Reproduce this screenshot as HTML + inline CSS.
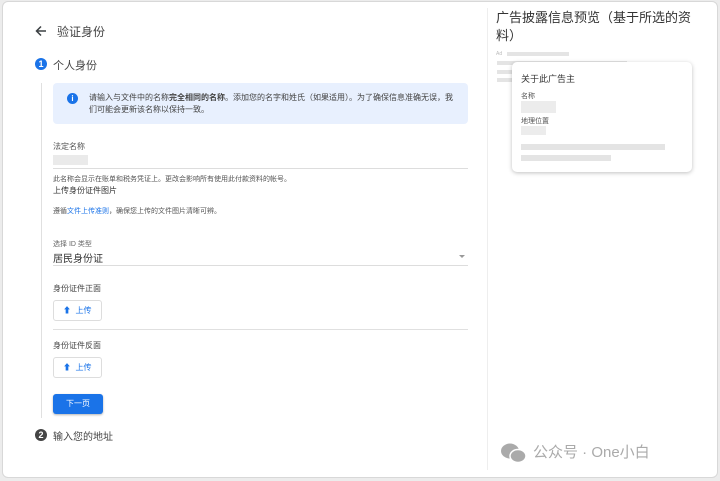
<!DOCTYPE html>
<html><head><meta charset="utf-8"><style>
*{margin:0;padding:0;box-sizing:border-box}
body{width:720px;height:481px;background:#ececec;font-family:"Liberation Sans","Noto Sans CJK SC",sans-serif;color:#3c4043;position:relative;overflow:hidden}
.card{position:absolute;left:2px;top:1px;width:716px;height:477px;background:#fff;border:1px solid #d8d8d8;border-radius:6px}
.a{position:absolute}
.t{white-space:nowrap}
.g{background:#e4e4e4;position:absolute}
</style></head><body>
<div class="card"></div>
<div class="a" style="left:487px;top:8px;width:1px;height:462px;background:#eee"></div>
<svg class="a" style="left:34px;top:24px" width="14" height="14" viewBox="0 0 14 14"><path d="M12 7H2.5M7 2.5L2.5 7 7 11.5" stroke="#3c4043" stroke-width="1.5" fill="none"/></svg>
<div class="a t" style="left:57px;top:23px;font-size:12px;color:#444">验证身份</div>
<div class="a" style="left:35px;top:58px;width:12px;height:12px;border-radius:50%;background:#1a73e8;color:#fff;font-size:9px;font-weight:bold;text-align:center;line-height:12px">1</div>
<div class="a t" style="left:53px;top:57px;font-size:11px;color:#444">个人身份</div>
<div class="a" style="left:41px;top:83px;width:1px;height:335px;background:#e0e0e0"></div>
<div class="a" style="left:53px;top:83px;width:415px;height:41px;background:#e8f0fe;border-radius:4px"></div>
<div class="a" style="left:67px;top:93px;width:11px;height:11px;border-radius:50%;background:#1a73e8;color:#fff;font-size:8px;font-weight:bold;text-align:center;line-height:11px">i</div>
<div class="a" style="left:89px;top:92px;width:370px;font-size:8px;line-height:12px;color:#444">请输入与文件中的名称<b>完全相同的名称</b>。添加您的名字和姓氏（如果适用）。为了确保信息准确无误，我们可能会更新该名称以保持一致。</div>
<div class="a t" style="left:53px;top:141px;font-size:8px;color:#555">法定名称</div>
<div class="g" style="left:53px;top:155px;width:35px;height:10px;background:#eaeaea"></div>
<div class="a" style="left:53px;top:168px;width:415px;height:1px;background:#ddd"></div>
<div class="a t" style="left:53px;top:174px;font-size:7px;color:#555">此名称会显示在账单和税务凭证上。更改会影响所有使用此付款资料的帐号。</div>
<div class="a t" style="left:53px;top:185px;font-size:8px;color:#333">上传身份证件图片</div>
<div class="a t" style="left:53px;top:206px;font-size:7px;color:#555">遵循<span style="color:#1a73e8">文件上传准则</span>，确保您上传的文件图片清晰可辨。</div>
<div class="a t" style="left:53px;top:239px;font-size:7px;color:#666">选择 ID 类型</div>
<div class="a t" style="left:53px;top:250px;font-size:10px;color:#333">居民身份证</div>
<div class="a" style="left:459px;top:255px;border:3px solid transparent;border-top:3px solid #999"></div>
<div class="a" style="left:53px;top:265px;width:415px;height:1px;background:#ddd"></div>
<div class="a t" style="left:53px;top:283px;font-size:8px;color:#444">身份证件正面</div>
<div class="a" style="left:53px;top:300px;width:49px;height:21px;border:1px solid #ddd;border-radius:3px"></div>
<div class="a t" style="left:63px;top:305px;font-size:8px;color:#1a73e8">⬆&nbsp;&nbsp;上传</div>
<div class="a" style="left:53px;top:329px;width:415px;height:1px;background:#e0e0e0"></div>
<div class="a t" style="left:53px;top:340px;font-size:8px;color:#444">身份证件反面</div>
<div class="a" style="left:53px;top:357px;width:49px;height:21px;border:1px solid #ddd;border-radius:3px"></div>
<div class="a t" style="left:63px;top:362px;font-size:8px;color:#1a73e8">⬆&nbsp;&nbsp;上传</div>
<div class="a" style="left:53px;top:394px;width:50px;height:20px;background:#1a73e8;border-radius:3px;color:#fff;font-size:8px;text-align:center;line-height:20px;box-shadow:0 1px 2px rgba(0,0,0,.3)">下一页</div>
<div class="a" style="left:35px;top:429px;width:12px;height:12px;border-radius:50%;background:#444;color:#fff;font-size:9px;font-weight:bold;text-align:center;line-height:12px">2</div>
<div class="a t" style="left:53px;top:428px;font-size:10px;color:#444">输入您的地址</div>
<div class="a" style="left:496px;top:9px;width:200px;font-size:13px;line-height:18px;color:#333">广告披露信息预览（基于所选的资料）</div>
<div class="a t" style="left:496px;top:51px;font-size:5px;color:#bbb">Ad</div>
<div class="g" style="left:507px;top:52px;width:62px;height:4px"></div>
<div class="g" style="left:497px;top:61px;width:130px;height:4px"></div>
<div class="g" style="left:497px;top:70px;width:20px;height:4px"></div>
<div class="g" style="left:497px;top:78px;width:20px;height:4px"></div>
<div class="a" style="left:512px;top:62px;width:180px;height:110px;background:#fff;border-radius:5px;box-shadow:0 1px 4px rgba(0,0,0,.25)"></div>
<div class="a t" style="left:521px;top:72px;font-size:9px;color:#333">关于此广告主</div>
<div class="a t" style="left:521px;top:91px;font-size:7px;color:#555">名称</div>
<div class="g" style="left:521px;top:101px;width:35px;height:12px;background:#ececec"></div>
<div class="a t" style="left:521px;top:116px;font-size:7px;color:#555">地理位置</div>
<div class="g" style="left:521px;top:126px;width:25px;height:9px;background:#ececec"></div>
<div class="g" style="left:521px;top:144px;width:144px;height:6px"></div>
<div class="g" style="left:521px;top:155px;width:90px;height:6px"></div>
<svg class="a" style="left:500px;top:442px" width="28" height="22" viewBox="0 0 28 22"><ellipse cx="10" cy="9" rx="9" ry="7.5" fill="#aaa"/><ellipse cx="18" cy="14" rx="8" ry="6.5" fill="#aaa" stroke="#fff" stroke-width="1.5"/></svg>
<div class="a t" style="left:533px;top:441px;font-size:15px;color:#aaa">公众号 · One小白</div>
</body></html>
